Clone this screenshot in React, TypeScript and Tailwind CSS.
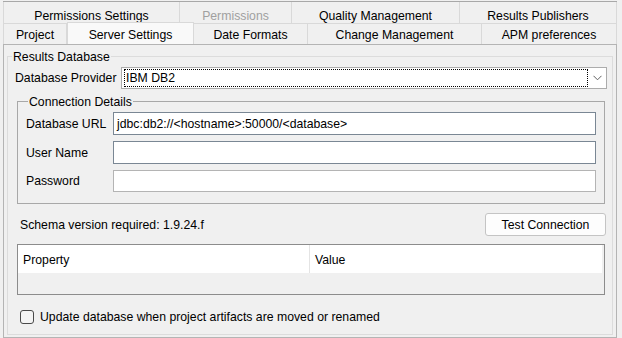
import React from "react";

const Tab = ({ w, label, disabled, pt }: { w: string; label: string; disabled?: boolean; pt: string }) => (
  <div
    className={
      "flex h-full items-center justify-center border-r border-[#d9d9d9] bg-[#f0f0f0] " +
      w +
      " " +
      pt +
      (disabled ? " text-[#a0a0a0]" : " text-black")
    }
  >
    {label}
  </div>
);

export default function App() {
  return (
    <div className="w-[622px] h-[338px] overflow-hidden bg-[#f0f0f0] font-['Liberation_Sans',Arial,sans-serif] text-[12.25px] leading-[14px] text-black">
      <div className="h-[1px]" />
      <div className="ml-[3px] w-[614px] border-t border-[#a8a8a8]">
        {/* Row 1 */}
        <div className="flex h-[22px] border-b border-l border-[#d9d9d9]">
          <Tab w="w-[176px]" pt="pt-[6px]" label="Permissions Settings" />
          <Tab w="w-[112px]" pt="pt-[6px]" label="Permissions" disabled />
          <Tab w="w-[168px]" pt="pt-[6px]" label="Quality Management" />
          <Tab w="w-[157px]" pt="pt-[6px]" label="Results Publishers" />
        </div>
        {/* Row 2 */}
        <div className="flex h-[20px] border-l border-[#d9d9d9]">
          <Tab w="w-[63px]" pt="pt-[2px]" label="Project" />
          <div className="relative z-10 -mt-[2px] flex h-[22px] w-[127px] items-center justify-center border-x border-t border-[#d9d9d9] bg-[#f9f9f9] pt-[3px]">
            Server Settings
          </div>
          <Tab w="w-[114px]" pt="pt-[2px]" label="Date Formats" />
          <Tab w="w-[174px]" pt="pt-[2px]" label="Change Management" />
          <Tab w="w-[135px]" pt="pt-[2px]" label="APM preferences" />
        </div>
        {/* Panel */}
        <div className="h-[294px] border border-[#b4b4b4] bg-[#f0f0f0] pt-[11px]">
          {/* Results Database group */}
          <div className="ml-[3px] mr-[3px] h-[279px] border border-[#dcdcdc]">
            <div className="-mt-[7px] ml-[4px] w-fit bg-[#f0f0f0] px-[1px] leading-[14px]">Results Database</div>
            <div className="mt-[3px] flex items-center pl-[7px]">
              <div className="w-[106px]">Database Provider</div>
              <div className="flex h-[22px] w-[486px] items-center border border-[#acacac] bg-white">
                <div className="ml-[2px] flex h-[18px] w-[464px] items-center border border-dotted border-black pl-[1px]">
                  IBM DB2
                </div>
                <div className="flex flex-1 items-center justify-center">
                  <svg width="9" height="6" viewBox="0 0 9 6">
                    <path d="M0.5 0.8 L4.5 4.8 L8.5 0.8" fill="none" stroke="#606060" strokeWidth="1" />
                  </svg>
                </div>
              </div>
            </div>
            {/* Connection Details */}
            <div className="ml-[9px] mt-[12px] w-[588px] border border-[#a8a8a8] pb-[11px]">
              <div className="-mt-[7px] ml-[10px] w-fit bg-[#f0f0f0] px-[1px] leading-[14px]">Connection Details</div>
              <div className="mt-[3px] flex flex-col gap-[6px] pl-[8px]">
                <div className="flex items-center">
                  <div className="w-[87px]">Database URL</div>
                  <div className="flex h-[23px] w-[483px] items-center border border-[#7a8794] bg-white pl-[3px]">
                    jdbc:db2://&lt;hostname&gt;:50000/&lt;database&gt;
                  </div>
                </div>
                <div className="flex items-center">
                  <div className="w-[87px]">User Name</div>
                  <div className="h-[23px] w-[483px] border border-[#7a8794] bg-white" />
                </div>
                <div className="flex items-center">
                  <div className="w-[87px]">Password</div>
                  <div className="h-[22px] w-[483px] border border-[#b4b4b4] bg-white" />
                </div>
              </div>
            </div>
            {/* Schema row */}
            <div className="mt-[9px] flex items-center justify-between pl-[12px] pr-[6px]">
              <div>Schema version required: 1.9.24.f</div>
              <div className="flex h-[23px] w-[121px] items-center justify-center rounded-[3px] border border-[#c4c4c4] bg-[#fdfdfd]">
                Test Connection
              </div>
            </div>
            {/* Table */}
            <div className="ml-[9px] mt-[8px] h-[51px] w-[588px] border border-[#8c8c8c] bg-[#f0f0f0]">
              <div className="flex h-[28px] w-[584px] bg-white">
                <div className="flex w-[292px] items-center border-r border-[#e4e4e4] pl-[5px] pt-[1px]">Property</div>
                <div className="flex items-center pl-[5px] pt-[1px]">Value</div>
              </div>
            </div>
            {/* Checkbox */}
            <div className="ml-[12px] mt-[15px] flex items-center">
              <div className="h-[14px] w-[14px] rounded-[3px] border border-[#4a4a4a] bg-[#f4f4f4]" />
              <div className="ml-[6px]">Update database when project artifacts are moved or renamed</div>
            </div>
          </div>
        </div>
      </div>
    </div>
  );
}
